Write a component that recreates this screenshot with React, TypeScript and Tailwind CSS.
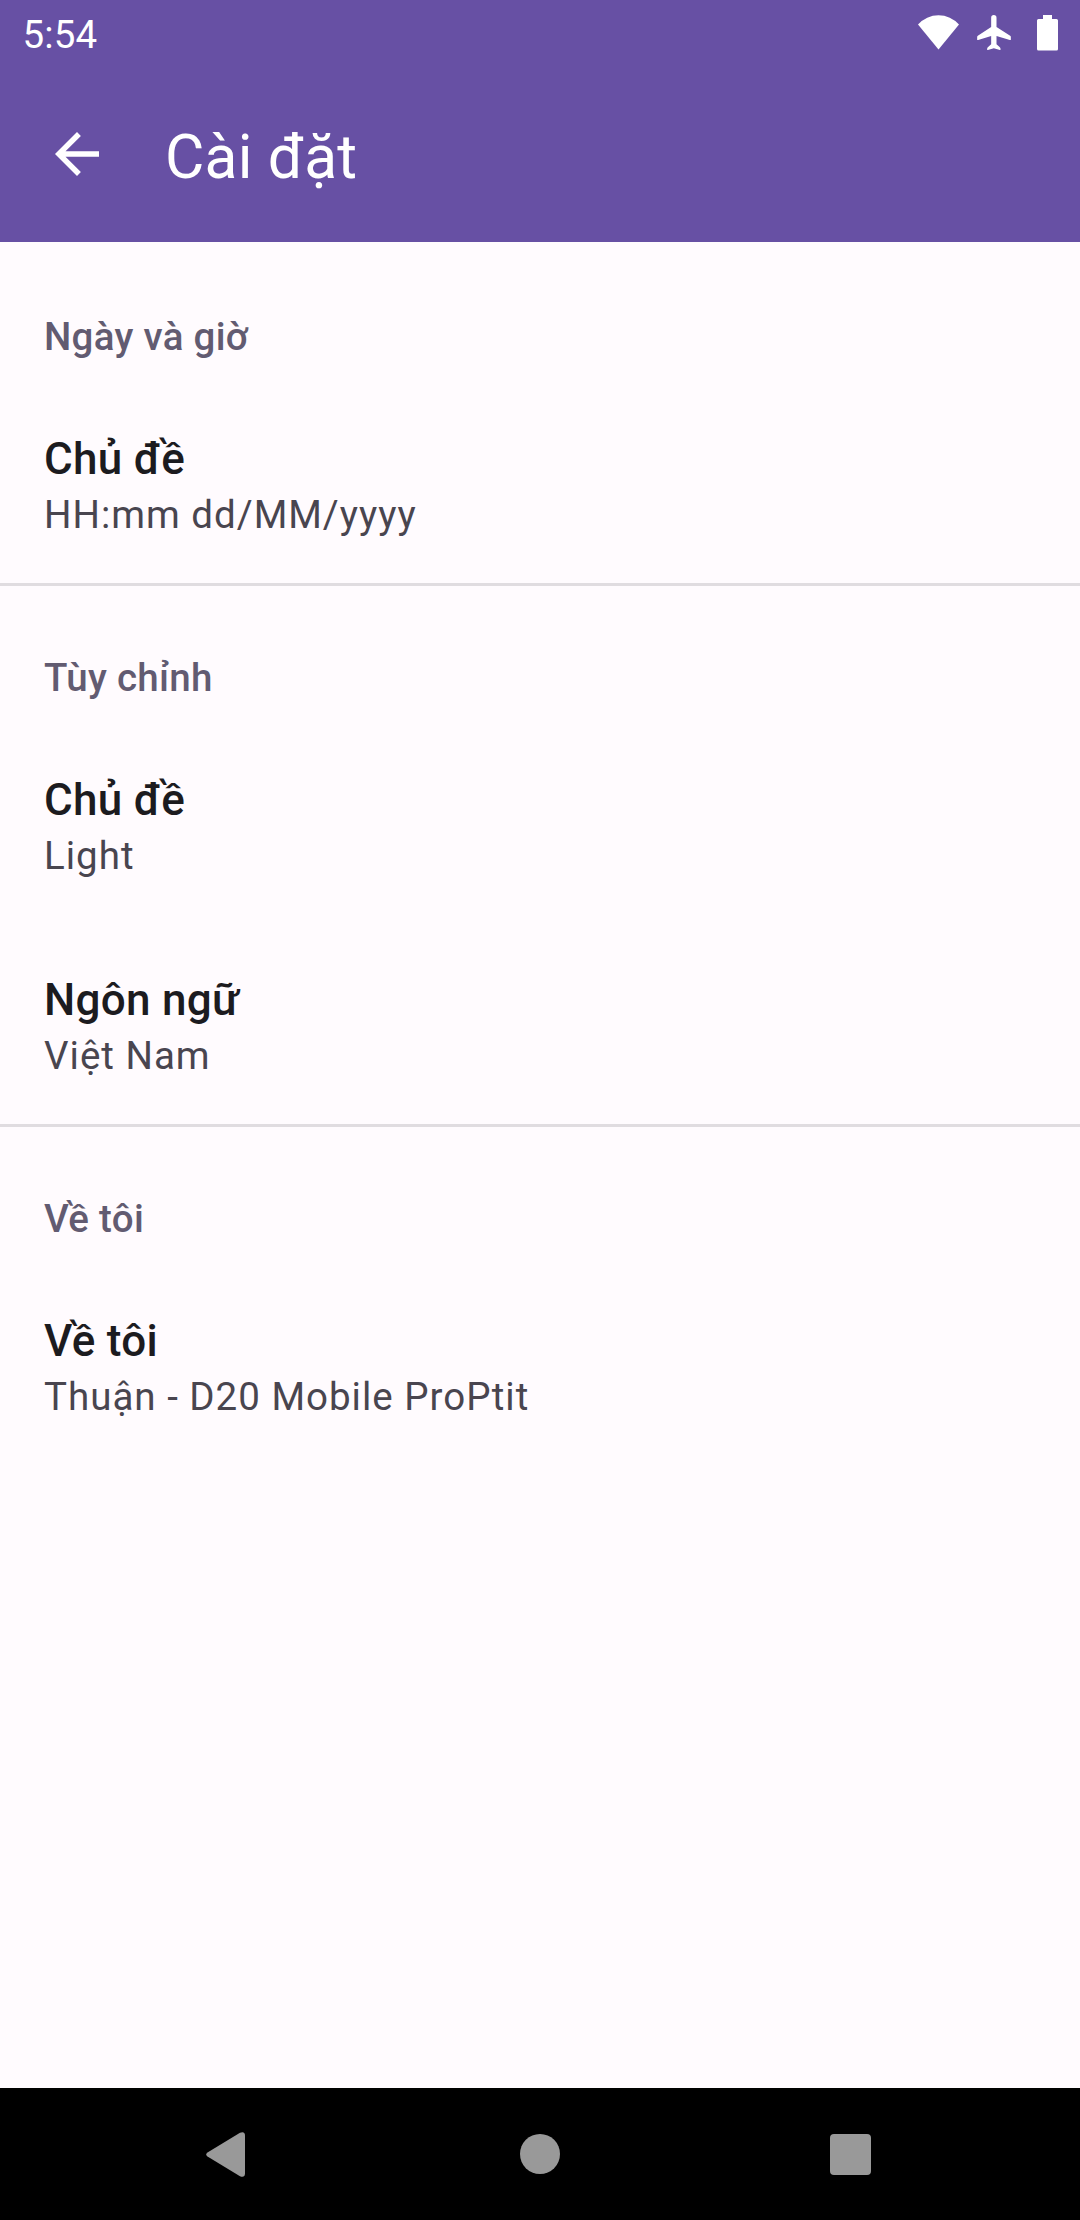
import React from "react";

function Heading({ children }: { children: string }) {
  return <h2 className="h-[48px] text-[38.5px] leading-[47px] font-medium tracking-[0.3px] text-[#625b71]">{children}</h2>;
}

function Item({ title, value }: { title: string; value: string }) {
  return (
    <div>
      <div className="h-[56px] text-[44px] leading-[56px] font-medium tracking-[0.3px] text-[#1c1b1f]">{title}</div>
      <div className="h-[56px] text-[38.5px] leading-[55px] tracking-[1px] text-[#49454f]">{value}</div>
    </div>
  );
}

function Group({ heading, items }: { heading: string; items: [string, string][] }) {
  return (
    <section className="px-[44px] pt-[68px] pb-[43px]">
      <Heading>{heading}</Heading>
      <div className="mt-[70px] flex flex-col gap-[88px]">
        {items.map(([title, value]) => (
          <Item key={title} title={title} value={value} />
        ))}
      </div>
    </section>
  );
}

export default function App() {
  return (
    <div className="flex h-[2220px] w-[1080px] flex-col overflow-hidden bg-[#fffbfe] font-['Roboto',sans-serif] whitespace-nowrap">
      <header className="h-[242px] shrink-0 bg-[#6750a4] text-white">
        <div className="flex h-[66px] items-start justify-between pr-[22px] pl-[22.5px]">
          <span className="text-[38.5px] leading-[69px] tracking-[0.15px]">5:54</span>
          <div className="flex items-start pt-[15px]">
            <svg className="mr-[18px] h-[36px] w-[41px]" viewBox="0 0 41 36" fill="currentColor">
              <path d="M20.5 34.5 0 9.500A27.500 27.500 0 0 1 41 9.500Z" />
            </svg>
            <svg className="mr-[26px] h-[35px] w-[34px]" viewBox="22 22 101 105" fill="currentColor">
              <path d="M64 30a8 8 0 0 1 16 0v28l41 26q2 1 2 4v8q0 2-3 1L80 85v25l10 9q2 2 2 4v3q0 1-2 1l-18-5-18 5q-2 0-2-1v-3q0-2 2-4l10-9V85L25 97q-3 1-3-1v-8q0-3 2-4l40-26z" />
            </svg>
            <svg className="h-[36px] w-[21px]" viewBox="0 0 21 36" fill="currentColor">
              <path d="M6 0h9v4h4.500q1.500 0 1.500 1.500v28.500q0 1.500-1.500 1.500h-18Q0 35.500 0 34V5.500Q0 4 1.500 4H6z" />
            </svg>
          </div>
        </div>
        <div className="flex h-[176px] items-start pt-[53px] pl-[44px]">
          <svg className="mt-[2px] h-[66px] w-[66px]" viewBox="0 0 24 24" fill="currentColor">
            <path d="M20 11H7.830l5.590-5.590L12 4l-8 8 8 8 1.410-1.410L7.830 13H20z" />
          </svg>
          <h1 className="ml-[55px] text-[60.5px] leading-[77px] tracking-[0.2px]">Cài đặt</h1>
        </div>
      </header>
      <main className="flex-1 pt-[3px]">
        <Group heading="Ngày và giờ" items={[["Chủ đề", "HH:mm dd/MM/yyyy"]]} />
        <div className="-mt-[3px] h-[3px] bg-[#e0dce0]" />
        <Group heading="Tùy chỉnh" items={[["Chủ đề", "Light"], ["Ngôn ngữ", "Việt Nam"]]} />
        <div className="-mt-[3px] h-[3px] bg-[#e0dce0]" />
        <Group heading="Về tôi" items={[["Về tôi", "Thuận - D20 Mobile ProPtit"]]} />
      </main>
      <nav className="flex h-[132px] shrink-0 items-start bg-black pt-[44px] text-[#999]">
        <svg className="ml-[206px] h-[45px] w-[39px]" viewBox="0 0 39 45" fill="currentColor">
          <path d="M1.500 20.500 34 .8q4.800-1.800 5 2.700v38q-.2 4.500-5 2.700L1.500 24.500q-2.600-2 0-4z" />
        </svg>
        <div className="mt-[2px] ml-[275px] h-[40px] w-[40px] rounded-full bg-[#999]" />
        <div className="mt-[2px] ml-[270px] h-[41px] w-[41px] rounded-[4px] bg-[#999]" />
      </nav>
    </div>
  );
}
